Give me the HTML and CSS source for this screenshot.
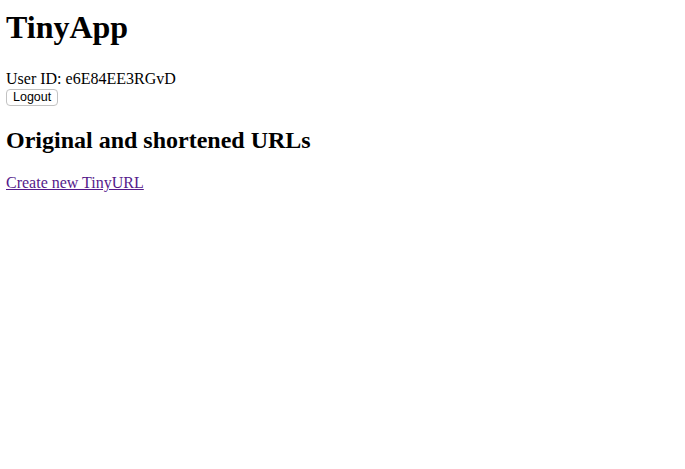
FILE: index.html
```html
<!DOCTYPE html>
<html>
<head>
<meta charset="utf-8">
<title>TinyApp</title>
<link rel="stylesheet" href="styles.css">
</head>
<body>
<header class="header">
  <h1 class="title">TinyApp</h1>
  <form class="user">
    <div class="user-id">User ID: e6E84EE3RGvD</div>
    <button type="button" class="logout">Logout</button>
  </form>
</header>
<main>
  <h2 class="subtitle">Original and shortened URLs</h2>
  <a class="create" href="#">Create new TinyURL</a>
</main>
</body>
</html>
```
FILE: styles.css
```css
body {
  margin: 0;
  padding: 9px 6px;
  font-family: "Liberation Serif", "Times New Roman", serif;
  font-size: 16px;
  color: #000;
  background: #fff;
}
.title {
  margin: 0 0 23.5px;
  font-size: 32px;
  font-weight: bold;
}
.user {
  margin: 0;
}
.user-id {
  line-height: normal;
}
.logout {
  display: block;
  margin: 1px 0 0;
  padding: 0 6px;
  height: 17px;
  line-height: 15px;
  font-family: "Liberation Sans", Arial, sans-serif;
  font-size: 12.5px;
  color: #000;
  background: #fff;
  border: 1px solid #c2c2c2;
  border-radius: 4px;
}
.subtitle {
  margin: 21.92px 0 19.92px;
  font-size: 24px;
  font-weight: bold;
}
.create {
  color: #551a8b;
  text-decoration: underline;
}
```
